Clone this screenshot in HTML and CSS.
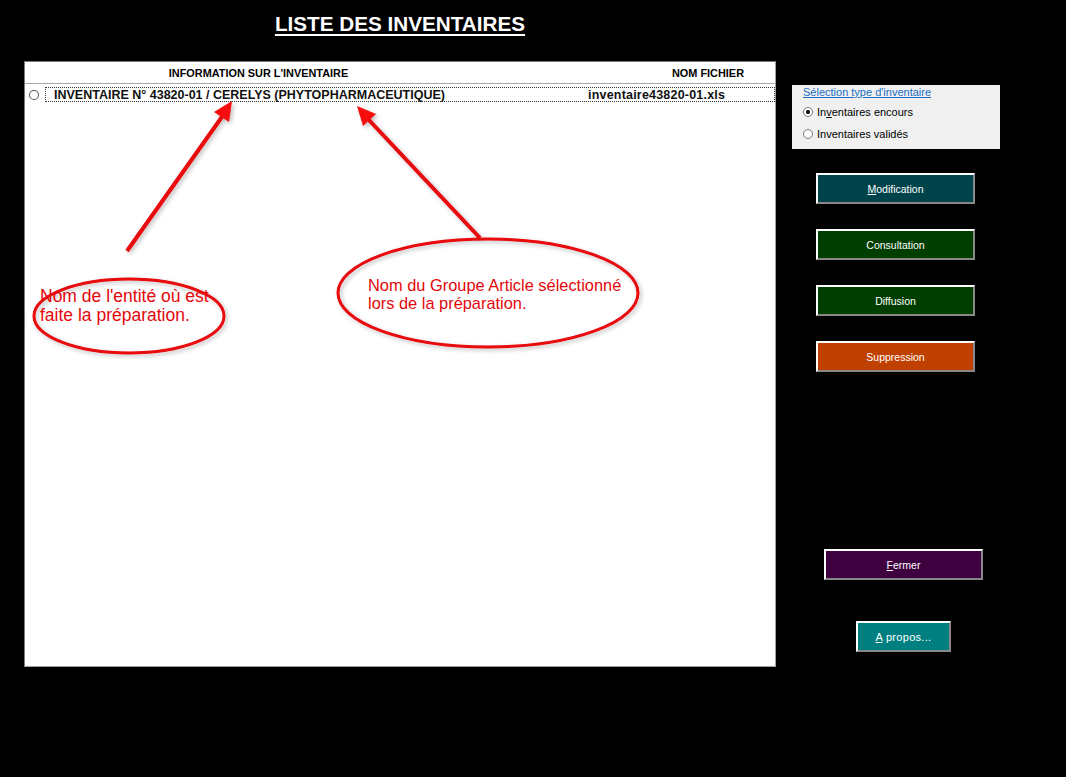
FILE: index.html
```html
<!DOCTYPE html>
<html lang="fr">
<head>
<meta charset="utf-8">
<title>Liste des inventaires</title>
<link rel="stylesheet" href="styles.css">
</head>
<body>
<div class="app">
  <section class="left">
    <h1 class="title">LISTE DES INVENTAIRES</h1>
    <div class="list">
      <div class="list-head">
        <span class="col-info">INFORMATION SUR L'INVENTAIRE</span>
        <span class="col-file">NOM FICHIER</span>
      </div>
      <div class="list-row">
        <span class="row-radio"></span>
        <div class="row-focus">
          <span class="row-info">INVENTAIRE N° 43820-01 / CERELYS (PHYTOPHARMACEUTIQUE)</span>
          <span class="row-file">inventaire43820-01.xls</span>
        </div>
      </div>
    </div>
  </section>

  <aside class="right">
    <div class="filter">
      <a class="filter-title" href="#">Sélection type d'inventaire</a>
      <label class="opt"><span class="opt-radio checked"></span>In<u>v</u>entaires encours</label>
      <label class="opt"><span class="opt-radio"></span>Inventaires validés</label>
    </div>
    <div class="actions">
      <button class="btn btn-modif"><u>M</u>odification</button>
      <button class="btn btn-green">Consultation</button>
      <button class="btn btn-green">Diffusion</button>
      <button class="btn btn-suppr">Suppression</button>
    </div>
    <button class="btn btn-close"><u>F</u>ermer</button>
    <button class="btn btn-about"><u>A</u> propos...</button>
  </aside>
</div>

<svg class="notes" width="1066" height="777" viewBox="0 0 1066 777">
  <defs>
    <filter id="soft" x="-20%" y="-20%" width="140%" height="140%">
      <feDropShadow dx="2" dy="2" stdDeviation="2" flood-color="#000" flood-opacity="0.25"/>
    </filter>
  </defs>
  <g filter="url(#soft)" fill="none" stroke="#e8070c">
    <line x1="127" y1="251" x2="224" y2="114" stroke-width="4"/>
    <polygon points="232,101 229,122 214,112" fill="#f70a0a" stroke="none"/>
    <line x1="480" y1="238" x2="368" y2="119" stroke-width="4"/>
    <polygon points="357,106 376,114 363,126" fill="#f70a0a" stroke="none"/>
    <ellipse cx="129" cy="316" rx="95" ry="37" stroke-width="3"/>
    <ellipse cx="488" cy="293" rx="150" ry="54" stroke-width="3"/>
  </g>
  <g class="note-text">
    <text class="note-a" x="40" y="302">Nom de l'entité où est</text>
    <text class="note-a" x="40" y="321">faite la préparation.</text>
    <text class="note-b" x="368" y="291">Nom du Groupe Article sélectionné</text>
    <text class="note-b" x="368" y="309">lors de la préparation.</text>
  </g>
</svg>
</body>
</html>
```

FILE: styles.css
```css
html, body {
  margin: 0;
  padding: 0;
  background: #000;
  width: 1066px;
  height: 777px;
  overflow: hidden;
  font-family: "Liberation Sans", Arial, sans-serif;
}

.app {
  display: flex;
  padding-left: 24px;
}

.left {
  width: 752px;
}

.title {
  margin: 0;
  height: 61px;
  box-sizing: border-box;
  padding-top: 12px;
  text-align: center;
  color: #fff;
  font-size: 20.7px;
  font-weight: bold;
  line-height: 24px;
  text-decoration: underline;
  text-decoration-thickness: 2px;
  text-underline-offset: 3px;
}

.list {
  height: 606px;
  box-sizing: border-box;
  background: #fff;
  border: 1px solid #a0a0a0;
  border-top-color: #7a7a7a;
  border-left-color: #7a7a7a;
}

.list-head {
  display: flex;
  height: 21px;
  align-items: center;
  border-bottom: 1px solid #a8a8a8;
  font-size: 10.9px;
  font-weight: bold;
  color: #000;
}

.col-info {
  width: 467px;
  text-align: center;
}

.col-file {
  margin-left: 180px;
}

.list-row {
  display: flex;
  align-items: center;
  height: 17px;
  margin-top: 2px;
}

.row-radio {
  width: 8px;
  height: 8px;
  margin-left: 4px;
  border: 1.5px solid #555;
  border-radius: 50%;
  background: #fff;
}

.row-focus {
  display: flex;
  align-items: center;
  margin-left: 6px;
  width: 731px;
  height: 15px;
  box-sizing: border-box;
  border: 1px dotted #333;
  font-size: 12.5px;
  font-weight: bold;
  color: #111;
}

.row-info {
  margin-left: 8px;
  width: 534px;
}

.row-file {
  letter-spacing: 0.2px;
}

.right {
  margin-left: 16px;
  width: 208px;
  padding-top: 85px;
  display: flex;
  flex-direction: column;
}

.filter {
  height: 64px;
  box-sizing: border-box;
  background: #f0f0f0;
  padding: 0 0 0 11px;
  display: flex;
  flex-direction: column;
  font-size: 11px;
}

.filter-title {
  color: #1a6fc4;
  text-decoration: underline;
  line-height: 14px;
  height: 16px;
}

.opt {
  display: flex;
  align-items: center;
  height: 22px;
  color: #000;
}

.opt-radio {
  width: 8px;
  height: 8px;
  border: 1px solid #777;
  border-radius: 50%;
  background: #fff;
  margin-right: 4px;
  position: relative;
}

.opt-radio.checked::after {
  content: "";
  position: absolute;
  left: 2px;
  top: 2px;
  width: 4px;
  height: 4px;
  border-radius: 50%;
  background: #000;
}

.actions {
  margin-top: 24px;
  margin-left: 24px;
  display: flex;
  flex-direction: column;
  gap: 25px;
}

.btn {
  width: 159px;
  height: 31px;
  box-sizing: border-box;
  border: 2px solid;
  border-color: #fff #888 #888 #fff;
  color: #fff;
  font-family: "Liberation Sans", Tahoma, sans-serif;
  font-size: 10.5px;
  padding: 0;
  text-align: center;
}

.btn-modif { background: #00434b; }
.btn-green { background: #003e00; }
.btn-suppr { background: #c04000; }

.btn-close {
  background: #3f0040;
  margin-top: 177px;
  margin-left: 32px;
}

.btn-about {
  background: #007f80;
  width: 95px;
  margin-top: 41px;
  margin-left: 64px;
  font-size: 11px;
  letter-spacing: 0.3px;
}

.notes {
  position: absolute;
  left: 0;
  top: 0;
  pointer-events: none;
}

.note-text text {
  fill: #e3070b;
  font-family: "Liberation Sans", Arial, sans-serif;
}

.note-text .note-a {
  font-size: 17.5px;
}

.note-text .note-b {
  font-size: 16.4px;
}
```
